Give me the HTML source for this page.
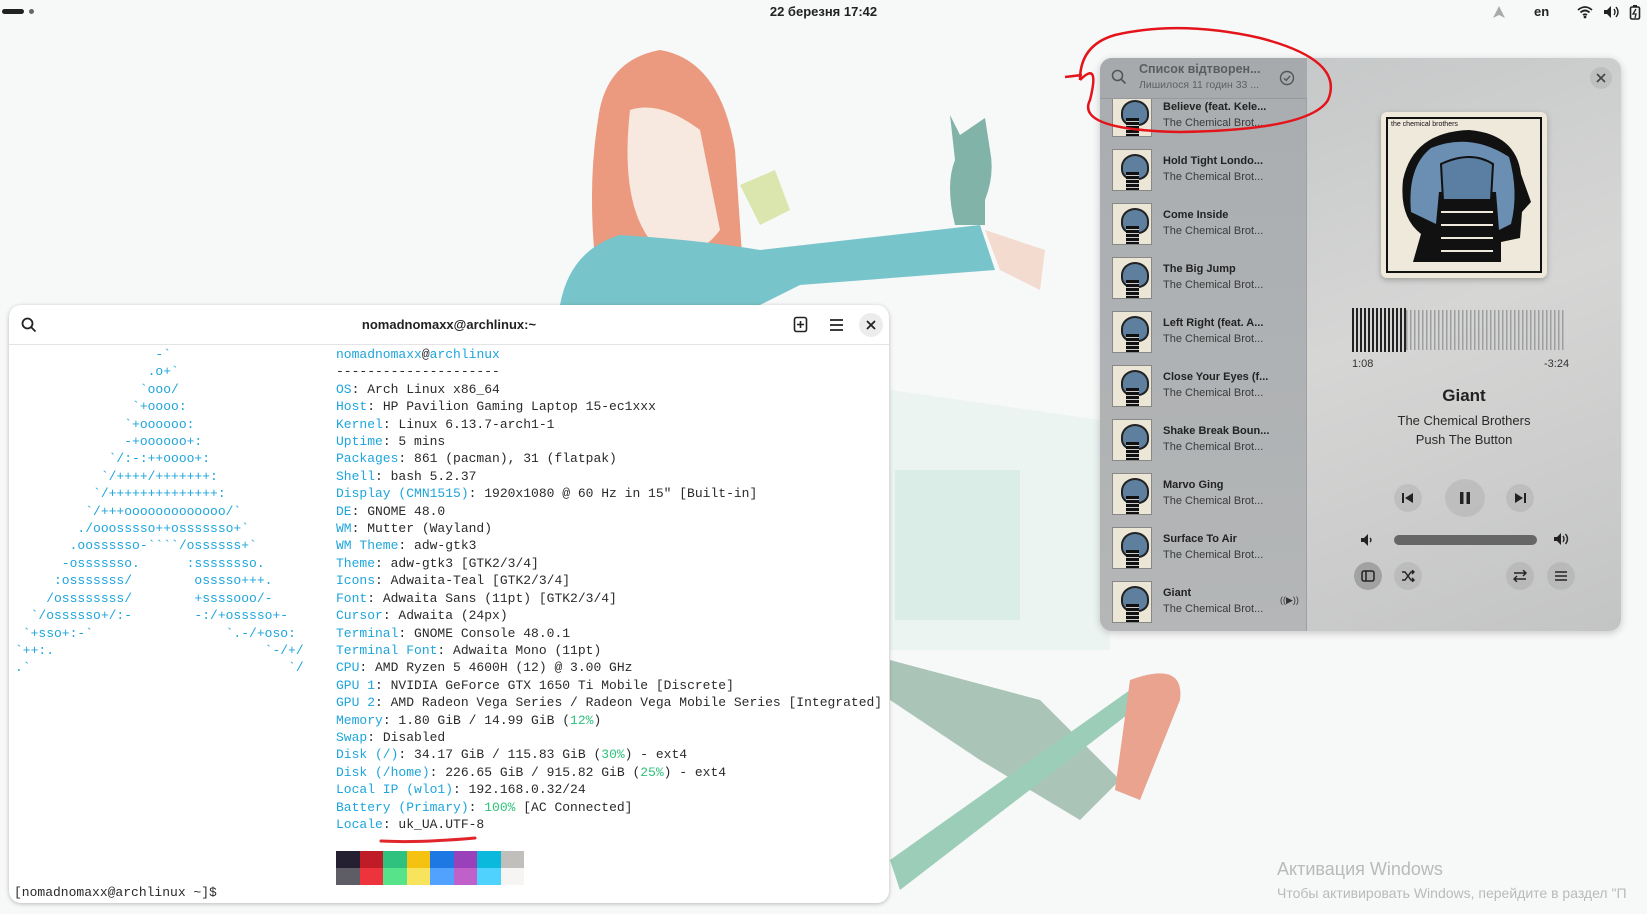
<!DOCTYPE html>
<html><head><meta charset="utf-8">
<style>
*{margin:0;padding:0;box-sizing:border-box}
body{width:1647px;height:914px;overflow:hidden;background:#f7f8f8;font-family:"Liberation Sans","DejaVu Sans",sans-serif;position:relative}
.abs{position:absolute}
#top{left:0;top:0;width:1647px;height:24px;font-size:13px;font-weight:bold;color:#222}
#term{left:9px;top:305px;width:880px;height:598px;background:#fff;border-radius:12px;box-shadow:0 1px 4px rgba(0,0,0,.25);overflow:hidden}
#term .tb{height:40px;border-bottom:1px solid #e4e4e4;position:relative}
pre{font-family:"Liberation Mono","DejaVu Sans Mono",monospace;font-size:13px;line-height:17.4px;color:#2a2a2a;position:absolute}
.c{color:#1ea5dc}.g{color:#2fc27a}
#player{left:1100px;top:58px;width:521px;height:573px;border-radius:12px;overflow:hidden;background:linear-gradient(160deg,#c2c5c6,#d6d6d5 50%,#c3c4c4);box-shadow:0 2px 8px rgba(0,0,0,.2)}
#list{left:0;top:0;width:207px;height:573px;background:linear-gradient(180deg,#a9adb0,#b4b6b7);border-right:1px solid #9fa2a4}
.row{position:absolute;left:0;width:207px;height:54px}
.th{position:absolute;left:12px;top:0px;width:40px;height:42px;background:#ece6d6;border:1px solid #888}
.th::before{content:"";position:absolute;left:8px;top:4px;width:24px;height:22px;border-radius:50% 50% 40% 40%;background:#5f7f9e;border:2px solid #222}
.th::after{content:"";position:absolute;left:13px;top:22px;width:13px;height:18px;background:repeating-linear-gradient(#111 0 3px,#ccc 3px 4px)}
.t1{position:absolute;left:63px;top:6px;font-size:11px;font-weight:bold;color:#222;white-space:nowrap}
.t2{position:absolute;left:63px;top:22px;font-size:11px;color:#3a3a3a;white-space:nowrap}
.btn{position:absolute;border-radius:50%;background:rgba(0,0,0,.07);display:flex;align-items:center;justify-content:center}
</style></head><body>

<svg class="abs" style="left:0;top:0;opacity:.85" width="1647" height="914">
<path d="M598 120 Q605 60 660 50 Q720 60 735 150 L745 300 L600 300 Q585 200 598 120Z" fill="#e98a6a"/>
<path d="M630 110 Q660 100 700 130 L720 230 Q690 270 650 240 Q620 200 630 110Z" fill="#f8e7dc"/>
<path d="M560 305 Q570 250 620 235 Q700 240 760 250 L980 225 L995 270 L800 285 L760 305Z" fill="#63bcc4"/>
<path d="M985 230 L1045 250 L1040 290 L1000 270Z" fill="#f3d6c9"/>
<path d="M950 115 L960 135 L985 118 L990 150 Q995 175 985 200 L985 225 L955 225 Q945 185 955 160Z" fill="#6ea89c"/>
<path d="M740 185 L775 170 L790 210 L760 225Z" fill="#d7e3a3"/>
<path d="M890 390 L1100 420 L1110 650 L890 650Z" fill="#e9f4f0"/>
<path d="M895 470 L1020 470 L1020 620 L895 620Z" fill="#d6ece4"/>
<path d="M890 660 L1040 700 L1120 780 L1080 820 L980 760 L890 700Z" fill="#9dbdad"/>
<path d="M890 860 L1130 690 L1140 705 L900 890Z" fill="#8cc6ae"/>
<path d="M1130 680 Q1185 660 1180 700 L1140 800 L1115 790Z" fill="#e8957c"/>
</svg>

<div id="top" class="abs">
  <div class="abs" style="left:2px;top:9px;width:22px;height:5px;background:#222;border-radius:3px"></div>
  <div class="abs" style="left:29px;top:9px;width:5px;height:5px;background:#666;border-radius:50%"></div>
  <div class="abs" style="left:0;width:1647px;top:4px;text-align:center">22 березня 17:42</div>
  <svg class="abs" style="left:1492px;top:5px" width="14" height="14"><path d="M7 1 L13 13 L7 10 L1 13Z" fill="#aaa"/></svg>
  <div class="abs" style="left:1534px;top:4px">en</div>
  <svg class="abs" style="left:1577px;top:5px" width="16" height="14"><path d="M1 5 Q8 -1 15 5 M3.5 7.5 Q8 3.5 12.5 7.5 M6 10 Q8 8.5 10 10" stroke="#222" stroke-width="1.8" fill="none"/><circle cx="8" cy="12" r="1.4" fill="#222"/></svg>
  <svg class="abs" style="left:1603px;top:5px" width="16" height="14"><path d="M1 5h3l4-4v12l-4-4H1z" fill="#222"/><path d="M11 4q2 3 0 6M13 2q4 5 0 10" stroke="#222" stroke-width="1.4" fill="none"/></svg>
  <svg class="abs" style="left:1629px;top:4px" width="12" height="16"><rect x="1.5" y="3" width="9" height="12" rx="1.5" stroke="#222" stroke-width="1.6" fill="none"/><rect x="4" y="1" width="4" height="2" fill="#222"/><path d="M7 5l-3 5h3l-1 4" stroke="#222" stroke-width="1.3" fill="none"/></svg>
</div>

<div id="term" class="abs">
  <div class="tb">
    <svg class="abs" style="left:12px;top:12px" width="16" height="16"><circle cx="6.5" cy="6.5" r="5" stroke="#222" stroke-width="1.8" fill="none"/><path d="M10 10l4.5 4.5" stroke="#222" stroke-width="1.8"/></svg>
    <div class="abs" style="left:0;width:880px;top:12px;text-align:center;font-size:13px;font-weight:bold;color:#222">nomadnomaxx@archlinux:~</div>
    <svg class="abs" style="left:784px;top:11px" width="16" height="18"><rect x="1.5" y="1.5" width="12" height="14" rx="2" stroke="#222" stroke-width="1.6" fill="none"/><path d="M7.5 5v7M4 8.5h7" stroke="#222" stroke-width="1.6"/></svg>
    <svg class="abs" style="left:820px;top:13px" width="16" height="14"><path d="M1 2h13M1 7h13M1 12h13" stroke="#222" stroke-width="1.8"/></svg>
    <div class="abs" style="left:850px;top:8px;width:24px;height:24px;border-radius:50%;background:#ececec"></div>
    <svg class="abs" style="left:857px;top:15px" width="10" height="10"><path d="M1 1l8 8M9 1l-8 8" stroke="#222" stroke-width="1.8"/></svg>
  </div>
<pre class="c" style="left:6px;top:41px">                  -&#96;
                 .o+&#96;
                &#96;ooo/
               &#96;+oooo:
              &#96;+oooooo:
              -+oooooo+:
            &#96;/:-:++oooo+:
           &#96;/++++/+++++++:
          &#96;/++++++++++++++:
         &#96;/+++ooooooooooooo/&#96;
        ./ooosssso++osssssso+&#96;
       .oossssso-&#96;&#96;&#96;&#96;/ossssss+&#96;
      -osssssso.      :ssssssso.
     :osssssss/        osssso+++.
    /ossssssss/        +ssssooo/-
  &#96;/ossssso+/:-        -:/+osssso+-
 &#96;+sso+:-&#96;                 &#96;.-/+oso:
&#96;++:.                           &#96;-/+/
.&#96;                                 &#96;/</pre>
<pre style="left:327px;top:41px"><span class="c">nomadnomaxx</span>@<span class="c">archlinux</span>
---------------------
<span class="c">OS</span>: Arch Linux x86_64
<span class="c">Host</span>: HP Pavilion Gaming Laptop 15-ec1xxx
<span class="c">Kernel</span>: Linux 6.13.7-arch1-1
<span class="c">Uptime</span>: 5 mins
<span class="c">Packages</span>: 861 (pacman), 31 (flatpak)
<span class="c">Shell</span>: bash 5.2.37
<span class="c">Display (CMN1515)</span>: 1920x1080 @ 60 Hz in 15" [Built-in]
<span class="c">DE</span>: GNOME 48.0
<span class="c">WM</span>: Mutter (Wayland)
<span class="c">WM Theme</span>: adw-gtk3
<span class="c">Theme</span>: adw-gtk3 [GTK2/3/4]
<span class="c">Icons</span>: Adwaita-Teal [GTK2/3/4]
<span class="c">Font</span>: Adwaita Sans (11pt) [GTK2/3/4]
<span class="c">Cursor</span>: Adwaita (24px)
<span class="c">Terminal</span>: GNOME Console 48.0.1
<span class="c">Terminal Font</span>: Adwaita Mono (11pt)
<span class="c">CPU</span>: AMD Ryzen 5 4600H (12) @ 3.00 GHz
<span class="c">GPU 1</span>: NVIDIA GeForce GTX 1650 Ti Mobile [Discrete]
<span class="c">GPU 2</span>: AMD Radeon Vega Series / Radeon Vega Mobile Series [Integrated]
<span class="c">Memory</span>: 1.80 GiB / 14.99 GiB (<span class="g">12%</span>)
<span class="c">Swap</span>: Disabled
<span class="c">Disk (/)</span>: 34.17 GiB / 115.83 GiB (<span class="g">30%</span>) - ext4
<span class="c">Disk (/home)</span>: 226.65 GiB / 915.82 GiB (<span class="g">25%</span>) - ext4
<span class="c">Local IP (wlo1)</span>: 192.168.0.32/24
<span class="c">Battery (Primary)</span>: <span class="g">100%</span> [AC Connected]
<span class="c">Locale</span>: uk_UA.UTF-8</pre>
  <svg class="abs" style="left:370px;top:530px" width="100" height="10"><path d="M2 6 Q40 8 96 3" stroke="#e0262b" stroke-width="3" fill="none" stroke-linecap="round"/></svg>
  <div class="abs" style="left:327px;top:546px;width:188px;height:34px;display:grid;grid-template-columns:repeat(8,1fr)">
    <div style="background:#241f31"></div><div style="background:#c01c28"></div><div style="background:#2ec27e"></div><div style="background:#f5c211"></div><div style="background:#1e78e4"></div><div style="background:#9841bb"></div><div style="background:#0ab9dc"></div><div style="background:#c0bfbc"></div>
    <div style="background:#5e5c64"></div><div style="background:#ed333b"></div><div style="background:#57e389"></div><div style="background:#f8e45c"></div><div style="background:#51a1ff"></div><div style="background:#c061cb"></div><div style="background:#4fd2fd"></div><div style="background:#f6f5f4"></div>
  </div>
<pre style="left:5px;top:579px">[nomadnomaxx@archlinux ~]$</pre>
</div>

<div id="player" class="abs">
  <div id="list" class="abs"></div>
</div>

<div class="abs" style="left:1100px;top:58px;width:207px;height:573px;overflow:hidden">
<div class="row" style="top:37px"><div class="th"></div><div class="t1">Believe (feat. Kele...</div><div class="t2">The Chemical Brot...</div></div>
<div class="row" style="top:91px"><div class="th"></div><div class="t1">Hold Tight Londo...</div><div class="t2">The Chemical Brot...</div></div>
<div class="row" style="top:145px"><div class="th"></div><div class="t1">Come Inside</div><div class="t2">The Chemical Brot...</div></div>
<div class="row" style="top:199px"><div class="th"></div><div class="t1">The Big Jump</div><div class="t2">The Chemical Brot...</div></div>
<div class="row" style="top:253px"><div class="th"></div><div class="t1">Left Right (feat. A...</div><div class="t2">The Chemical Brot...</div></div>
<div class="row" style="top:307px"><div class="th"></div><div class="t1">Close Your Eyes (f...</div><div class="t2">The Chemical Brot...</div></div>
<div class="row" style="top:361px"><div class="th"></div><div class="t1">Shake Break Boun...</div><div class="t2">The Chemical Brot...</div></div>
<div class="row" style="top:415px"><div class="th"></div><div class="t1">Marvo Ging</div><div class="t2">The Chemical Brot...</div></div>
<div class="row" style="top:469px"><div class="th"></div><div class="t1">Surface To Air</div><div class="t2">The Chemical Brot...</div></div>
<div class="row" style="top:523px"><div class="th"></div><div class="t1">Giant</div><div class="t2">The Chemical Brot...</div><div class="abs" style="left:180px;top:14px;font-size:9px;color:#333">((▶))</div></div>
</div>

<div class="abs" style="left:1100px;top:58px;width:207px;height:41px;background:#a6aaad;border-bottom:1px solid #979a9c;border-radius:12px 0 0 0"></div>
<svg class="abs" style="left:1111px;top:69px" width="16" height="16"><circle cx="6.5" cy="6.5" r="5" stroke="#555" stroke-width="1.6" fill="none"/><path d="M10 10l4.5 4.5" stroke="#555" stroke-width="1.6"/></svg>
<div class="abs" style="left:1139px;top:62px;font-size:12.5px;font-weight:bold;color:#5a5d60">Список відтворен...</div>
<div class="abs" style="left:1139px;top:79px;font-size:10.5px;color:#5e6164">Лишилося 11 годин 33 ...</div>
<svg class="abs" style="left:1279px;top:70px" width="16" height="16"><circle cx="8" cy="8" r="6.5" stroke="#555" stroke-width="1.4" fill="none"/><path d="M5 8.2l2.2 2.2L11 6" stroke="#555" stroke-width="1.4" fill="none"/></svg>

<div class="abs" style="left:1381px;top:112px;width:166px;height:166px;background:#efe9dc;border-radius:6px;box-shadow:0 2px 6px rgba(0,0,0,.25)">
  <svg width="166" height="166"><rect x="6" y="6" width="154" height="154" fill="none" stroke="#111" stroke-width="2"/>
  <path d="M32 150 L40 122 Q18 105 22 68 Q32 20 88 18 Q135 22 140 62 L150 90 L141 100 L139 126 L120 130 L120 150Z" fill="#111"/>
  <path d="M30 100 Q26 55 50 36 Q90 20 128 45 Q138 80 130 112 L118 118 L115 80 L58 80 L55 112Z" fill="#6a8fb3"/>
  <path d="M60 52 Q90 38 112 52 L110 88 L62 88Z" fill="#5b7fa3" stroke="#111" stroke-width="2"/>
  <path d="M60 100h52M60 113h52M60 126h52M60 139h52" stroke="#efe9dc" stroke-width="2"/>
  <text x="10" y="14" font-size="7" font-family="Liberation Sans" fill="#111">the chemical brothers</text></svg>
</div>

<div class="abs" style="left:1352px;top:308px;width:54px;height:44px;background:repeating-linear-gradient(90deg,#222 0 2px,transparent 2px 4px)"></div>
<div class="abs" style="left:1406px;top:310px;width:160px;height:40px;background:repeating-linear-gradient(90deg,#9d9e9f 0 1.5px,transparent 1.5px 4px)"></div>
<div class="abs" style="left:1352px;top:358px;font-size:11px;color:#333">1:08</div>
<div class="abs" style="left:1544px;top:358px;font-size:11px;color:#333">-3:24</div>
<div class="abs" style="left:1307px;width:314px;top:386px;text-align:center;font-size:17px;font-weight:bold;color:#222">Giant</div>
<div class="abs" style="left:1307px;width:314px;top:413px;text-align:center;font-size:13px;color:#2a2a2a">The Chemical Brothers</div>
<div class="abs" style="left:1307px;width:314px;top:432px;text-align:center;font-size:13px;color:#2a2a2a">Push The Button</div>

<div class="btn" style="left:1394px;top:484px;width:28px;height:28px"><svg width="14" height="14"><path d="M2 2v10" stroke="#222" stroke-width="2"/><path d="M12 2L4 7l8 5z" fill="#222"/></svg></div>
<div class="btn" style="left:1445px;top:479px;width:40px;height:38px"><svg width="12" height="14"><rect x="1" y="1" width="3.5" height="12" fill="#222"/><rect x="7.5" y="1" width="3.5" height="12" fill="#222"/></svg></div>
<div class="btn" style="left:1506px;top:484px;width:28px;height:28px"><svg width="14" height="14"><path d="M12 2v10" stroke="#222" stroke-width="2"/><path d="M2 2l8 5-8 5z" fill="#222"/></svg></div>

<svg class="abs" style="left:1360px;top:533px" width="14" height="14"><path d="M1 5h3l4-4v12l-4-4H1z" fill="#222"/><path d="M10 5q2 2 0 4" stroke="#222" stroke-width="1.4" fill="none"/></svg>
<div class="abs" style="left:1394px;top:535px;width:143px;height:10px;border-radius:5px;background:#666"></div>
<svg class="abs" style="left:1553px;top:532px" width="16" height="16"><path d="M1 5h3l4-4v12l-4-4H1z" fill="#222"/><path d="M10 4q2 3 0 6M12.5 2q4 5 0 10" stroke="#222" stroke-width="1.4" fill="none"/></svg>

<div class="btn" style="left:1354px;top:562px;width:28px;height:28px;background:rgba(0,0,0,.2)"><svg width="14" height="12"><rect x="1" y="1" width="12" height="10" rx="2" stroke="#222" stroke-width="1.5" fill="none"/><path d="M5 1v10" stroke="#222" stroke-width="1.5"/></svg></div>
<div class="btn" style="left:1394px;top:562px;width:28px;height:28px"><svg width="14" height="12"><path d="M1 2h3l6 8h3M1 10h3l6-8h3M11 0l2 2-2 2M11 8l2 2-2 2" stroke="#222" stroke-width="1.4" fill="none"/></svg></div>
<div class="btn" style="left:1506px;top:562px;width:28px;height:28px"><svg width="14" height="12"><path d="M1 3h12M1 9h12M10 0l3 3-3 3M4 6l-3 3 3 3" stroke="#222" stroke-width="1.4" fill="none"/></svg></div>
<div class="btn" style="left:1547px;top:562px;width:28px;height:28px"><svg width="14" height="12"><path d="M1 2h12M1 6h12M1 10h12" stroke="#222" stroke-width="1.6"/></svg></div>

<div class="btn" style="left:1590px;top:67px;width:22px;height:22px"><svg width="10" height="10"><path d="M1 1l8 8M9 1l-8 8" stroke="#444" stroke-width="1.6"/></svg></div>

<svg class="abs" style="left:1060px;top:20px" width="290" height="115"><path d="M20 60 Q40 40 30 80 Q15 110 120 112 Q250 110 268 80 Q285 40 200 18 Q120 0 55 15 Q20 25 20 60 M5 57 L22 55" stroke="#e3141a" stroke-width="2.5" fill="none"/></svg>

<div class="abs" style="left:1277px;top:859px;font-size:18px;color:#b9babb">Активация Windows</div>
<div class="abs" style="left:1277px;top:885px;font-size:14px;color:#b9babb;white-space:nowrap">Чтобы активировать Windows, перейдите в раздел "П</div>
</body></html>
